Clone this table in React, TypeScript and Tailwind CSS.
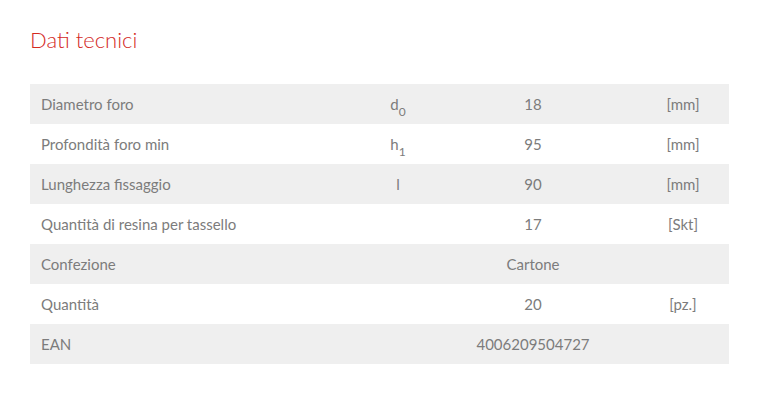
import React from 'react';

type Row = {
    label: string;
    symbol?: React.ReactNode;
    value: string;
    unit?: string;
};

const rows: Row[] = [
    { label: 'Diametro foro', symbol: <>d<sub className="text-[12px] align-[-3px]">0</sub></>, value: '18', unit: '[mm]' },
    { label: 'Profondità foro min', symbol: <>h<sub className="text-[12px] align-[-3px]">1</sub></>, value: '95', unit: '[mm]' },
    { label: 'Lunghezza fissaggio', symbol: 'l', value: '90', unit: '[mm]' },
    { label: 'Quantità di resina per tassello', value: '17', unit: '[Skt]' },
    { label: 'Confezione', value: 'Cartone' },
    { label: 'Quantità', value: '20', unit: '[pz.]' },
    { label: 'EAN', value: '4006209504727' },
];

export default function App() {
    return (
        <div className="w-[760px] h-[409px] bg-white px-[30px] pt-[24px]" style={{ fontFamily: 'Lato, "Open Sans", sans-serif' }}>
            <h2 className="text-[22px] font-light leading-[32px] text-[#d42a1f]">Dati tecnici</h2>

            <div className="mt-[28px] w-[699px] text-[15px] text-[#7c7c7c]">
                {rows.map((row, i) => (
                    <div
                        key={row.label}
                        className={`grid grid-cols-[300px_136px_134px_1fr] h-[40px] items-center ${i % 2 === 0 ? 'bg-[#efefef]' : 'bg-white'}`}
                    >
                        <div className="pl-[11px]">{row.label}</div>
                        <div className="text-center">{row.symbol}</div>
                        <div className="text-center">{row.value}</div>
                        <div className="pl-[37px] text-center">{row.unit}</div>
                    </div>
                ))}
            </div>
        </div>
    );
}
